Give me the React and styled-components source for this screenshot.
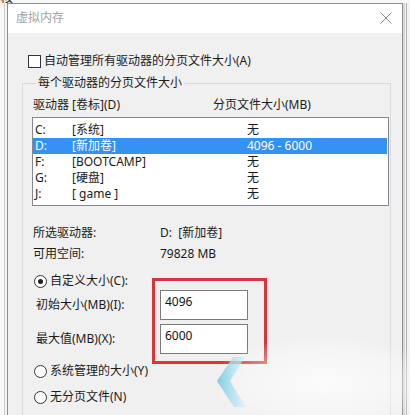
import React from "react";
import styled, { createGlobalStyle } from "styled-components";

const Global = createGlobalStyle`
  html, body { margin: 0; padding: 0; background: #f2f2f2; }
  body {
    font-family: "Noto Sans", "Noto Sans CJK SC", sans-serif;
    font-size: 12px;
    color: #1b1b1b;
  }
`;

const Screen = styled.div`
  position: relative;
  width: 410px;
  height: 415px;
  overflow: hidden;
  display: flex;
  flex-direction: column;
  background: #f2f2f2;
`;

const BackStrip = styled.div`
  height: 3px;
  flex: none;
  overflow: hidden;
  display: flex;
  align-items: flex-end;
  gap: 24px;
  background: #f7f7f7;
`;

const BackText = styled.span`
  font-size: 13px;
  line-height: 12px;
  color: #222;
  white-space: nowrap;
  margin-left: ${(p) => p.$ml || 0}px;
`;

const MainRow = styled.div`
  flex: 1;
  display: flex;
  min-height: 0;
`;

const LeftGutter = styled.div`
  width: 7px;
  flex: none;
  background: linear-gradient(to right, #f7f7f7 0 4px, #cdcdcd 4px 5px, #f3f3f3 5px);
`;

const RightGutter = styled.div`
  width: 7px;
  flex: none;
  background: linear-gradient(to right, #d9d9d9 0 2px, #eeeeee 2px 3px, #b5b5b5 3px 4px, #f2f2f2 4px);
`;

const Dialog = styled.div`
  flex: 1;
  display: flex;
  flex-direction: column;
  border: 1px solid #8e8e8e;
  border-bottom: none;
  background: #f0f0f0;
  min-width: 0;
`;

const TitleBar = styled.div`
  height: 27px;
  flex: none;
  background: #ffffff;
  display: flex;
  align-items: center;
  justify-content: space-between;
  padding: 0 10px 2px 8px;
`;

const Title = styled.span`
  font-size: 12px;
  line-height: 16px;
  color: #a2a2a2;
`;

const CloseIcon = styled.svg`
  width: 12px;
  height: 12px;
  display: block;
`;

const Body = styled.div`
  display: flex;
  flex-direction: column;
  padding: 0 11px 0 14px;
`;

const CheckRow = styled.label`
  display: flex;
  align-items: center;
  gap: 3px;
  margin: 20px 0 0 6px;
  line-height: 16px;
  height: 16px;
`;

const CheckBox = styled.span`
  width: 11px;
  height: 11px;
  border: 1px solid #333;
  background: #fff;
  flex: none;
`;

const Group = styled.fieldset`
  margin: 6px 0 0 0;
  padding: 6px 0 80px 9px;
  border: 1px solid #dadada;
  min-width: 0;
`;

const Legend = styled.legend`
  margin-left: 4px;
  padding: 0 2px;
  line-height: 16px;
`;

const HeaderRow = styled.div`
  display: grid;
  grid-template-columns: 180px 1fr;
  padding-left: 1px;
  line-height: 16px;
`;

const ListBox = styled.div`
  margin-top: 4px;
  margin-right: 1px;
  border: 1px solid #828790;
  background: #fff;
  padding: 4px 0 3px;
`;

const ListRow = styled.div`
  display: grid;
  grid-template-columns: 37px 175px 1fr;
  padding-left: 2px;
  height: 16px;
  line-height: 16px;
  margin-right: 1px;
  background: ${(p) => (p.$selected ? "#3592f2" : "transparent")};
  color: ${(p) => (p.$selected ? "#ffffff" : "#1b1b1b")};
`;

const InfoGrid = styled.div`
  display: grid;
  grid-template-columns: 127px 1fr;
  row-gap: 5px;
  margin-top: 19px;
  padding-left: 1px;
  line-height: 16px;
`;

const RadioRow = styled.label`
  display: flex;
  align-items: center;
  gap: 3px;
  padding-left: 2px;
  height: 16px;
  line-height: 16px;
  margin-top: ${(p) => p.$mt || 0}px;
`;

const Radio = styled.span`
  width: 11px;
  height: 11px;
  border-radius: 50%;
  border: 1px solid #333;
  background: #fff;
  flex: none;
  display: flex;
  align-items: center;
  justify-content: center;
  &::after {
    content: "";
    width: 5px;
    height: 5px;
    border-radius: 50%;
    background: #222;
    display: ${(p) => (p.$checked ? "block" : "none")};
  }
`;

const InputsBlock = styled.div`
  position: relative;
  display: flex;
  flex-direction: column;
  gap: 4px;
  margin-top: 1px;
`;

const FieldRow = styled.div`
  display: grid;
  grid-template-columns: 124px 88px;
  align-items: center;
  padding-left: 4px;
  line-height: 16px;
`;

const TextBox = styled.div`
  height: 30px;
  box-sizing: border-box;
  border: 1px solid #7a7a7a;
  background: #fff;
  padding: 3px 4px 0;
  line-height: 16px;
  color: #111;
`;

const Annotation = styled.div`
  position: absolute;
  left: 120px;
  top: -12px;
  width: 115px;
  height: 86px;
  box-sizing: border-box;
  border: 3px solid #d7373b;
  pointer-events: none;
`;

const Watermark = styled.svg`
  position: absolute;
  left: 200px;
  top: 330px;
  width: 210px;
  height: 85px;
  pointer-events: none;
`;

const rows = [
  { d: "C:", l: "[系统]", s: "无" },
  { d: "D:", l: "[新加卷]", s: "4096 - 6000", sel: true },
  { d: "F:", l: "[BOOTCAMP]", s: "无" },
  { d: "G:", l: "[硬盘]", s: "无" },
  { d: "J:", l: "[ game ]", s: "无" },
];

export default function App() {
  return (
    <>
      <Global />
      <Screen>
        <BackStrip>
          <BackText>核</BackText>
          <BackText $ml={10}>一一</BackText>
          <BackText $ml={10}>一一一一</BackText>
        </BackStrip>
        <MainRow>
          <LeftGutter />
          <Dialog>
            <TitleBar>
              <Title>虚拟内存</Title>
              <CloseIcon viewBox="0 0 12 12">
                <path d="M0.5 0.5 L11.5 11.5 M11.5 0.5 L0.5 11.5" stroke="#8a8a8a" strokeWidth="1" fill="none" />
              </CloseIcon>
            </TitleBar>
            <Body>
              <CheckRow>
                <CheckBox />
                <span>自动管理所有驱动器的分页文件大小(A)</span>
              </CheckRow>
              <Group>
                <Legend>每个驱动器的分页文件大小</Legend>
                <HeaderRow>
                  <span>驱动器 [卷标](D)</span>
                  <span>分页文件大小(MB)</span>
                </HeaderRow>
                <ListBox>
                  {rows.map((r) => (
                    <ListRow key={r.d} $selected={r.sel}>
                      <span>{r.d}</span>
                      <span>{r.l}</span>
                      <span>{r.s}</span>
                    </ListRow>
                  ))}
                </ListBox>
                <InfoGrid>
                  <span>所选驱动器:</span>
                  <span>D:&nbsp;&nbsp;[新加卷]</span>
                  <span>可用空间:</span>
                  <span>79828 MB</span>
                </InfoGrid>
                <RadioRow $mt={11}>
                  <Radio $checked />
                  <span>自定义大小(C):</span>
                </RadioRow>
                <InputsBlock>
                  <FieldRow>
                    <span>初始大小(MB)(I):</span>
                    <TextBox>4096</TextBox>
                  </FieldRow>
                  <FieldRow>
                    <span>最大值(MB)(X):</span>
                    <TextBox>6000</TextBox>
                  </FieldRow>
                  <Annotation />
                </InputsBlock>
                <RadioRow $mt={9}>
                  <Radio />
                  <span>系统管理的大小(Y)</span>
                </RadioRow>
                <RadioRow $mt={10}>
                  <Radio />
                  <span>无分页文件(N)</span>
                </RadioRow>
              </Group>
            </Body>
          </Dialog>
          <RightGutter />
        </MainRow>
        <Watermark viewBox="0 0 210 85">
          <defs>
            <linearGradient id="chev" x1="0" y1="0" x2="1" y2="0">
              <stop offset="0" stopColor="#7fcbe3" />
              <stop offset="1" stopColor="#d4eff7" stopOpacity="0.6" />
            </linearGradient>
            <radialGradient id="haze" cx="0.55" cy="0.6" r="0.6">
              <stop offset="0" stopColor="#ffffff" stopOpacity="0.75" />
              <stop offset="0.7" stopColor="#ffffff" stopOpacity="0.35" />
              <stop offset="1" stopColor="#ffffff" stopOpacity="0" />
            </radialGradient>
          </defs>
          <rect x="20" y="5" width="190" height="80" fill="url(#haze)" />
          <polygon points="33,27 17,51 34,77 46,77 30,51 45,27" fill="url(#chev)" />
        </Watermark>
      </Screen>
    </>
  );
}
